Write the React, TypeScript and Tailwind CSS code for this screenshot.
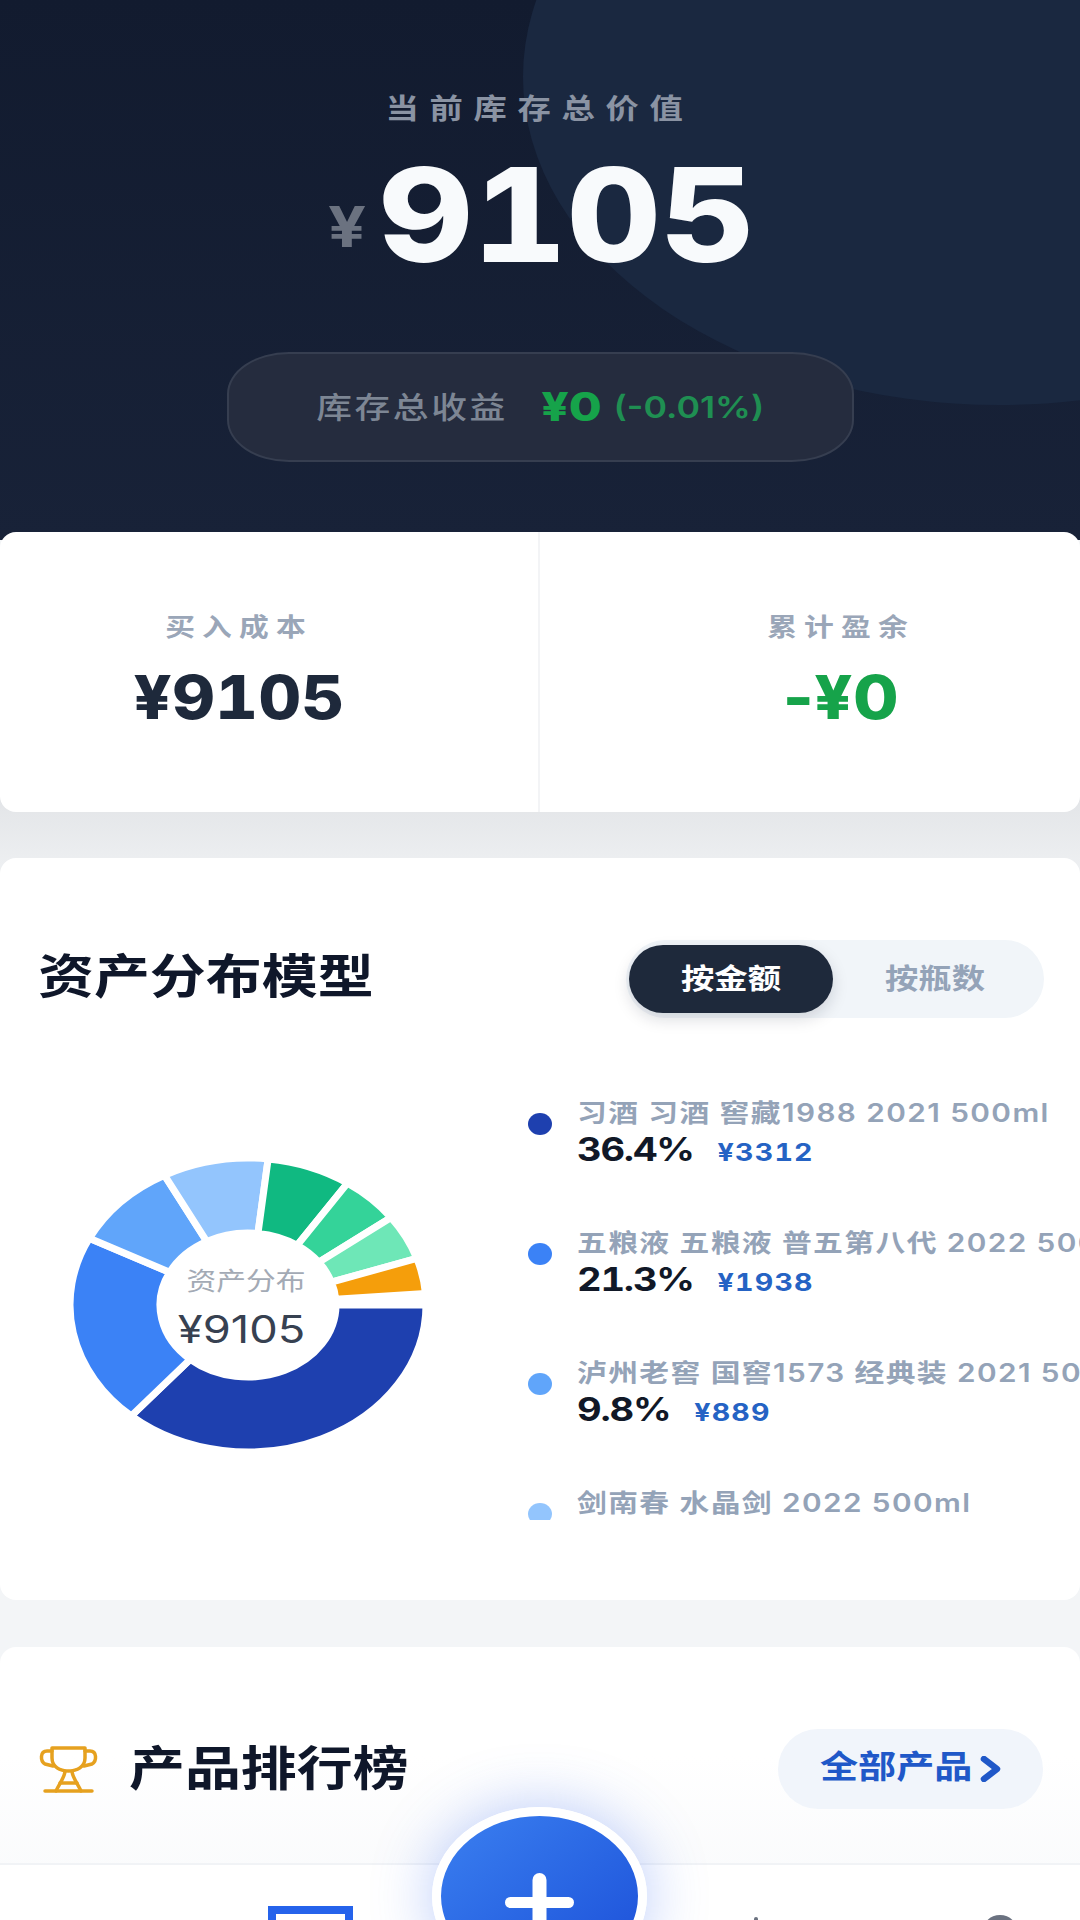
const SEGMENTS = [
  { from: 0, to: 131, color: "#1e40af" },
  { from: 131, to: 207, color: "#3b82f6" },
  { from: 207, to: 242, color: "#60a5fa" },
  { from: 242, to: 276.5, color: "#93c5fd" },
  { from: 276.5, to: 304, color: "#10b981" },
  { from: 304, to: 323.5, color: "#34d399" },
  { from: 323.5, to: 341.5, color: "#6ee7b7" },
  { from: 341.5, to: 355.5, color: "#f59e0b" },
];

const LEGEND = [
  { name: "习酒 习酒 窖藏1988 2021 500ml", pct: "36.4%", amount: "¥3312", dot: "bg-[#1e40af]" },
  { name: "五粮液 五粮液 普五第八代 2022 500ml", pct: "21.3%", amount: "¥1938", dot: "bg-[#3b82f6]" },
  { name: "泸州老窖 国窖1573 经典装 2021 500ml", pct: "9.8%", amount: "¥889", dot: "bg-[#60a5fa]" },
  { name: "剑南春 水晶剑 2022 500ml", pct: "8.9%", amount: "¥810", dot: "bg-[#93c5fd]" },
];

// donut is squashed in the reference, so every arc is an ellipse
function sector(from: number, to: number) {
  const cx = 248;
  const cy = 209;
  const pt = (rx: number, ry: number, deg: number) => {
    const a = (deg * Math.PI) / 180;
    return `${(cx + rx * Math.cos(a)).toFixed(2)} ${(cy + ry * Math.sin(a)).toFixed(2)}`;
  };
  const large = to - from > 180 ? 1 : 0;
  return [
    `M${pt(178, 147, from)}`,
    `A178 147 0 ${large} 1 ${pt(178, 147, to)}`,
    `L${pt(88, 72, to)}`,
    `A88 72 0 ${large} 0 ${pt(88, 72, from)}`,
    "Z",
  ].join(" ");
}

function Donut() {
  return (
    <div className="relative w-[528px] h-[424px] shrink-0">
      <svg width="528" height="424" viewBox="0 0 528 424">
        {SEGMENTS.map((s) => (
          <path key={s.color} d={sector(s.from, s.to)} fill={s.color} stroke="#fff" strokeWidth="7" />
        ))}
      </svg>
      <div className="absolute left-[148px] top-[168px] w-[200px] flex flex-col items-center">
        <span className="-ml-[4px] inline-block scale-x-[1.19] text-[25px] leading-[34px] text-[#a3aab5]">资产分布</span>
        <span className="-ml-[14px] mt-[8px] inline-block scale-x-[1.19] text-[38px] leading-[46px] text-[#374151]">¥9105</span>
      </div>
    </div>
  );
}

function Trophy() {
  return (
    <svg width="59" height="47" viewBox="0 0 59 47" fill="none" stroke="#e6a11f" strokeWidth="3.5" strokeLinecap="round" strokeLinejoin="round">
      <path d="M13 2H46V12C46 21 38 25 29.5 25C21 25 13 21 13 12Z" />
      <path d="M13 5H8C1 5 1 15 6 18L14 20" />
      <path d="M46 5H51C58 5 58 15 53 18L45 20" />
      <path d="M26 25C26 31 20 38 17 45" />
      <path d="M33 25C33 31 39 38 42 45" />
      <path d="M21 37H38" />
      <path d="M6 45H53" />
    </svg>
  );
}

export default function App() {
  return (
    <div className="relative h-[1920px] w-[1080px] overflow-hidden bg-[#f3f5f7] font-['Inter','Noto_Sans_CJK_SC',sans-serif]">
      <header className="relative h-[540px] overflow-hidden bg-gradient-to-b from-[#121b2f] to-[#182238] flex flex-col items-center pt-[94px]">
        <div className="absolute left-[523px] top-[-251px] w-[954px] h-[656px] rounded-[50%] bg-[#1a2840]" />
        <p className="relative inline-block scale-x-[1.19] text-[28px] leading-[30px] font-semibold tracking-[9px] text-[#8a93a3]">
          当前库存总价值
        </p>
        <div className="relative mt-[26px] pr-[14px] flex items-baseline leading-none">
          <span className="mr-[36px] -mt-[30px] relative -top-[15px] inline-block scale-x-[1.19] text-[56px] font-bold text-[#6b7280]">¥</span>
          <span className="inline-block scale-x-[1.12] text-[130px] font-extrabold tabular-nums text-[#f8fafc]">9105</span>
        </div>
        <div className="relative mt-[72px] flex items-center justify-center w-[627px] h-[110px] rounded-[62px/42px] border-2 border-[#363e50] bg-[#252c3e]">
          <div className="flex items-center scale-x-[1.19] whitespace-nowrap">
            <span className="text-[30px] font-medium tracking-[2.2px] text-[#7d8694]">库存总收益</span>
            <span className="ml-[28px] text-[40px] font-extrabold text-[#16a34a]">¥0</span>
            <span className="ml-[10px] text-[30px] font-semibold text-[#1f8f52]">(-0.01%)</span>
          </div>
        </div>
      </header>

      <section className="relative z-10 -mt-[8px] h-[280px] rounded-[16px] bg-white grid grid-cols-2">
        <div className="flex flex-col items-center pt-[80px] pr-[60px] border-r-2 border-[#f3f4f6]">
          <span className="inline-block scale-x-[1.19] text-[25px] leading-[30px] font-semibold tracking-[6px] text-[#9aa6b8]">买入成本</span>
          <span className="mt-[20px] inline-block scale-x-[1.1] text-[60px] leading-[70px] font-extrabold tracking-[0.5px] tabular-nums text-[#1e293b]">¥9105</span>
        </div>
        <div className="flex flex-col items-center pt-[80px] pl-[63px]">
          <span className="inline-block scale-x-[1.19] text-[25px] leading-[30px] font-semibold tracking-[6px] text-[#9aa6b8]">累计盈余</span>
          <span className="mt-[20px] inline-block scale-x-[1.1] text-[60px] leading-[70px] font-extrabold tracking-[0.5px] text-[#16a34a]">-¥0</span>
        </div>
      </section>

      <div className="-my-[20px] h-[86px] bg-gradient-to-b from-[#e2e4e7] to-[#eff1f3]" />

      <section className="relative z-10 h-[742px] rounded-[16px] bg-white pt-[82px]">
        <div className="flex items-center justify-between pl-[38px] pr-[36px] h-[78px]">
          <h2 className="-mt-[8px] origin-left scale-x-[1.19] text-[47px] leading-none font-bold text-[#0f172a]">资产分布模型</h2>
          <div className="flex items-center w-[418px] h-[78px] pl-[3px] rounded-[40px] bg-[#f1f5f9]">
            <div className="flex items-center justify-center w-[204px] h-[68px] rounded-[34px] bg-[#1e293b] shadow-[0_6px_16px_rgba(15,23,42,0.15)]">
              <span className="inline-block scale-x-[1.19] text-[28px] font-bold text-white">按金额</span>
            </div>
            <div className="flex-1 flex items-center justify-center pr-[6px]">
              <span className="inline-block scale-x-[1.19] text-[28px] font-bold text-[#94a3b8]">按瓶数</span>
            </div>
          </div>
        </div>
        <div className="mt-[78px] flex">
          <Donut />
          <div className="w-[552px] h-[424px] shrink-0 overflow-hidden flex flex-col gap-[56px]">
            {LEGEND.map((row) => (
              <div key={row.name} className="flex items-start h-[74px] shrink-0">
                <span className={`mt-[17px] w-[24px] h-[22px] rounded-[50%] shrink-0 ${row.dot}`} />
                <div className="ml-[25px] origin-left scale-x-[1.19] whitespace-nowrap">
                  <p className="text-[25px] leading-[34px] font-semibold tracking-[1.2px] text-[#94a3b8]">{row.name}</p>
                  <p className="flex items-baseline leading-[40px]">
                    <span className="text-[32px] font-bold tracking-[-1px] tabular-nums text-[#111827]">{row.pct}</span>
                    <span className="ml-[20px] text-[24px] font-bold tracking-[1px] tabular-nums text-[#2563c4]">{row.amount}</span>
                  </p>
                </div>
              </div>
            ))}
          </div>
        </div>
      </section>

      <section className="relative mt-[47px] h-[273px] rounded-[16px] bg-gradient-to-b from-white from-40% to-[#f8f9fb] pt-[81px]">
        <div className="flex items-center justify-between pl-[39px] pr-[37px] h-[82px]">
          <div className="flex items-center">
            <Trophy />
            <h2 className="-mt-[4px] ml-[31px] origin-left scale-x-[1.19] text-[47px] leading-none font-bold text-[#0f172a]">产品排行榜</h2>
          </div>
          <div className="flex items-center w-[265px] h-[80px] pl-[42px] rounded-[41px] bg-[#f1f5fb]">
            <span className="-mt-[4px] origin-left scale-x-[1.19] text-[32px] leading-none font-bold text-[#2058c8] whitespace-nowrap">全部产品</span>
            <svg className="ml-[32px]" width="21" height="26" viewBox="0 0 21 26" fill="none" stroke="#2058c8" strokeWidth="6.5" strokeLinecap="round" strokeLinejoin="round">
              <path d="M4 3L17 13L4 23" />
            </svg>
          </div>
        </div>
      </section>

      <nav className="absolute bottom-0 left-0 right-0 h-[57px] bg-white border-t-2 border-[#f1f3f6]">
        <div className="absolute left-[268px] top-[41px] w-[85px] h-[60px] border-[8px] border-[#2563eb]" />
        <div className="absolute left-[754px] top-[52px] w-[4px] h-[20px] rounded-full bg-[#6b7280]" />
        <div className="absolute left-[982px] top-[50px] w-[36px] h-[36px] rounded-full bg-[#6b7280]" />
      </nav>

      <div className="absolute left-[432px] top-[1807px] w-[215px] h-[178px] rounded-[50%] border-[9px] border-white bg-gradient-to-br from-[#3b7ff0] to-[#1d4ed8] shadow-[0_0_60px_rgba(59,110,240,0.35)]">
        <svg className="absolute left-[64px] top-[57px]" width="69" height="60" viewBox="0 0 69 60" fill="#fff">
          <rect x="0" y="24" width="69" height="11" rx="5.5" />
          <rect x="27.5" y="0" width="14" height="60" rx="7" />
        </svg>
      </div>
    </div>
  );
}
